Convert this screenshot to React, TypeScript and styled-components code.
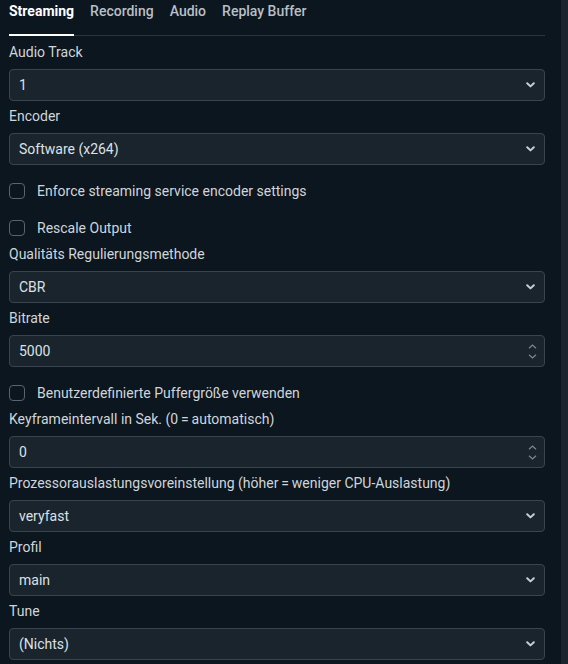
import styled, { createGlobalStyle } from "styled-components";

const GlobalStyle = createGlobalStyle`
  html, body {
    margin: 0;
    padding: 0;
    background: #0b161f;
  }
  body {
    font-family: Roboto, "Noto Sans", "Liberation Sans", sans-serif;
    color: #d3d8dd;
  }
`;

const Page = styled.div`
  display: flex;
  width: 568px;
  height: 664px;
  overflow: hidden;
  background: #0b161f;
`;

const Content = styled.div`
  flex: 1;
  padding: 0 16px 0 9px;
`;

const Scrollbar = styled.div`
  width: 7px;
  background: #1b252e;
`;

const Tabs = styled.div`
  display: flex;
  gap: 16px;
  height: 36px;
  border-bottom: 1px solid #2b353e;
  box-sizing: border-box;
`;

const Tab = styled.div<{ $active?: boolean }>`
  font-size: 14px;
  font-weight: ${(p) => (p.$active ? 700 : 500)};
  color: ${(p) => (p.$active ? "#ffffff" : "#b9bfc5")};
  line-height: 22px;
  height: 36px;
  box-sizing: border-box;
  border-bottom: 2px solid ${(p) => (p.$active ? "#ffffff" : "transparent")};
  margin-bottom: -1px;
`;

const Form = styled.div`
  display: flex;
  flex-direction: column;
  gap: 5px;
  padding-top: 6px;
`;

const Field = styled.div`
  display: flex;
  flex-direction: column;
  gap: 7px;
`;

const Label = styled.div`
  font-size: 14px;
  line-height: 20px;
  color: #d0d5da;
`;

const Control = styled.div`
  display: flex;
  align-items: center;
  height: 32px;
  box-sizing: border-box;
  border: 1px solid #3a444e;
  border-radius: 4px;
  background: #1a242d;
  padding: 0 9px;
  font-size: 14px;
  color: #dce1e6;
`;

const Value = styled.span`
  flex: 1;
`;

const Chevron = styled.svg`
  width: 9px;
  height: 6px;
`;

const Spinner = styled.div`
  display: flex;
  flex-direction: column;
  gap: 5px;
  margin-right: -2px;
`;

const SpinArrow = styled.svg`
  width: 9px;
  height: 5px;
`;

const CheckGroup = styled.div`
  display: flex;
  flex-direction: column;
  gap: 5px;
  padding-top: 5px;
  margin-bottom: -5px;
`;

const CheckRow = styled.label`
  display: flex;
  align-items: center;
  gap: 12px;
  height: 32px;
  font-size: 14px;
  color: #d0d5da;
`;

const Box = styled.span`
  width: 16px;
  height: 16px;
  box-sizing: border-box;
  border: 1px solid #59636d;
  border-radius: 4px;
`;

function Select({ value }: { value: string }) {
  return (
    <Control>
      <Value>{value}</Value>
      <Chevron viewBox="0 0 9 6">
        <path d="M1.2 1.2 L4.5 4.4 L7.8 1.2" fill="none" stroke="#c9ced3" strokeWidth="2" strokeLinecap="round" strokeLinejoin="round" />
      </Chevron>
    </Control>
  );
}

function NumberInput({ value }: { value: string }) {
  return (
    <Control>
      <Value>{value}</Value>
      <Spinner>
        <SpinArrow viewBox="0 0 9 5">
          <path d="M1 4.2 L4.5 1 L8 4.2" fill="none" stroke="#7f878f" strokeWidth="1.2" />
        </SpinArrow>
        <SpinArrow viewBox="0 0 9 5">
          <path d="M1 0.8 L4.5 4 L8 0.8" fill="none" stroke="#7f878f" strokeWidth="1.2" />
        </SpinArrow>
      </Spinner>
    </Control>
  );
}

function Check({ label }: { label: string }) {
  return (
    <CheckRow>
      <Box />
      {label}
    </CheckRow>
  );
}

export default function App() {
  return (
    <>
      <GlobalStyle />
      <Page>
        <Content>
          <Tabs>
            <Tab $active>Streaming</Tab>
            <Tab>Recording</Tab>
            <Tab>Audio</Tab>
            <Tab>Replay Buffer</Tab>
          </Tabs>
          <Form>
            <Field>
              <Label>Audio Track</Label>
              <Select value="1" />
            </Field>
            <Field>
              <Label>Encoder</Label>
              <Select value="Software (x264)" />
            </Field>
            <CheckGroup>
              <Check label="Enforce streaming service encoder settings" />
              <Check label="Rescale Output" />
            </CheckGroup>
            <Field>
              <Label>Qualitäts Regulierungsmethode</Label>
              <Select value="CBR" />
            </Field>
            <Field>
              <Label>Bitrate</Label>
              <NumberInput value="5000" />
            </Field>
            <CheckGroup>
              <Check label="Benutzerdefinierte Puffergröße verwenden" />
            </CheckGroup>
            <Field>
              <Label>Keyframeintervall in Sek. (0{"\u2009=\u2009"}automatisch)</Label>
              <NumberInput value="0" />
            </Field>
            <Field>
              <Label>Prozessorauslastungsvoreinstellung (höher{"\u2009=\u2009"}weniger CPU-Auslastung)</Label>
              <Select value="veryfast" />
            </Field>
            <Field>
              <Label>Profil</Label>
              <Select value="main" />
            </Field>
            <Field>
              <Label>Tune</Label>
              <Select value="(Nichts)" />
            </Field>
          </Form>
        </Content>
        <Scrollbar />
      </Page>
    </>
  );
}
